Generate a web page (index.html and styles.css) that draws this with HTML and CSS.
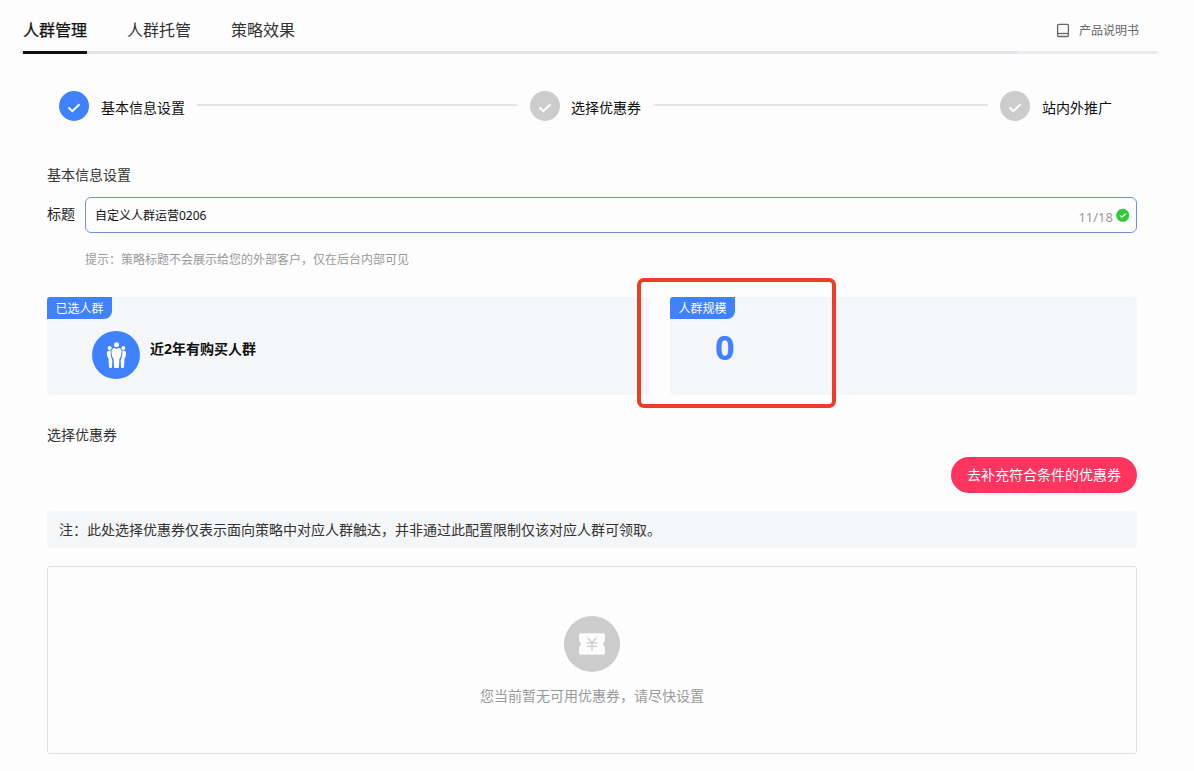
FILE: index.html
```html
<!DOCTYPE html>
<html lang="zh-CN">
<head>
<meta charset="utf-8">
<title>人群管理</title>
<link rel="stylesheet" href="styles.css">
</head>
<body>
<header class="header">
  <nav class="tabs">
    <a class="tab tab-active">人群管理</a>
    <a class="tab">人群托管</a>
    <a class="tab">策略效果</a>
  </nav>
  <a class="manual">
    <svg width="14" height="16" viewBox="0 0 14 16" fill="none" stroke="#666" stroke-width="1.3"><rect x="1.6" y="1.400" width="10.8" height="12.1" rx="1"/><path d="M1.6 10.500h10.8"/></svg>
    <span>产品说明书</span>
  </a>
</header>
<main class="main">
  <div class="steps">
    <div class="step step-done"><span class="dot"><svg width="30" height="30" viewBox="0 0 30 30"><path d="M9.500 16.400l3.8 3.8 7.2-7"/></svg></span><span class="step-name">基本信息设置</span></div>
    <i class="step-line"></i>
    <div class="step"><span class="dot"><svg width="30" height="30" viewBox="0 0 30 30"><path d="M9.500 16.400l3.8 3.8 7.2-7"/></svg></span><span class="step-name step-name-near">选择优惠券</span></div>
    <i class="step-line step-line-near"></i>
    <div class="step"><span class="dot"><svg width="30" height="30" viewBox="0 0 30 30"><path d="M9.500 16.400l3.8 3.8 7.2-7"/></svg></span><span class="step-name">站内外推广</span></div>
  </div>

  <h2 class="section-title">基本信息设置</h2>
  <div class="field">
    <label class="label">标题</label>
    <div class="input">
      <span class="value">自定义人群运营0206</span>
      <span class="count">11/18</span>
      <svg class="valid" width="14" height="14" viewBox="0 0 14 14"><circle cx="6.700" cy="7.300" r="6.5" fill="#2fca3a"/><path d="M3.900 7.4l2 1.8 3.8-3.5" fill="none" stroke="#fff" stroke-width="1.2"/></svg>
    </div>
  </div>
  <p class="hint">提示：策略标题不会展示给您的外部客户，仅在后台内部可见</p>

  <div class="cards">
    <section class="card card-crowd">
      <span class="tag">已选人群</span>
      <div class="crowd">
        <svg width="48" height="48" viewBox="0 0 48 48"><circle cx="24" cy="24" r="24" fill="#3f81ff"/><g fill="#fff"><circle cx="17.6" cy="17" r="2"/><circle cx="31.4" cy="17" r="2"/><path d="M18.600 19.500c-2.400-.5-3.700.6-3.700 2.500 0 2.200.5 4.200 1.600 5.500l.4 8.100q.1 1.300 1.100 1.300h1.300q.8 0 .8-1.100l.2-6.500c-1.300-2.500-1.700-6-1.700-9.800zM30.400 19.500c2.400-.5 3.700.6 3.700 2.500 0 2.200-.5 4.200-1.600 5.500l-.4 8.100q-.1 1.300-1.100 1.300h-1.300q-.8 0-.8-1.100l-.2-6.500c1.300-2.500 1.700-6 1.700-9.800z"/><circle cx="24.500" cy="13.800" r="2.500"/><path d="M24.500 18l1.800-1c2.300.2 3.200 1.500 3.200 3.400 0 3-.7 5.500-2.100 7.500l-.4 8q-.1 1-1.100 1h-2.800q-1 0-1.100-1l-.4-8c-1.400-2-2.100-4.500-2.100-7.500 0-1.900.9-3.200 3.200-3.400z"/></g></svg>
        <strong class="crowd-name">近2年有购买人群</strong>
      </div>
    </section>
    <section class="card card-size">
      <span class="tag">人群规模</span>
      <strong class="size">0</strong>
      <div class="highlight"></div>
    </section>
  </div>

  <h2 class="section-title section-coupon">选择优惠券</h2>
  <div class="actions"><button class="add">去补充符合条件的优惠券</button></div>
  <p class="note">注：此处选择优惠券仅表示面向策略中对应人群触达，并非通过此配置限制仅该对应人群可领取。</p>
  <div class="empty">
    <svg width="56" height="56" viewBox="0 0 56 56"><circle cx="28" cy="28" r="28" fill="#ccc"/><path d="M17 17.200h22q2 0 2 2v6a2.700 2.700 0 0 0 0 5.200v6.300q0 2-2 2h-22q-2 0-2-2v-6.300a2.700 2.700 0 0 0 0-5.200v-6q0-2 2-2z" fill="#fdfdfd"/><path d="M23.800 22l4.200 4.800 4.200-4.800M22.800 26.800h10.400M22.800 30.400h10.400M28 26.800v8" fill="none" stroke="#ccc" stroke-width="1.300"/></svg>
    <p class="empty-text">您当前暂无可用优惠券，请尽快设置</p>
  </div>
</main>
</body>
</html>
```
FILE: styles.css
```css
* { box-sizing: border-box; }
body {
  margin: 0;
  height: 771px;
  overflow: hidden;
  background: #fdfdfd;
  color: #333;
  font: 14px/20px "Noto Sans", "Noto Sans CJK SC", sans-serif;
}
p, h2 { margin: 0; font-size: 14px; font-weight: 400; }
svg { display: block; flex: none; }
.header {
  display: flex;
  justify-content: space-between;
  height: 54px;
  margin: 0 36px 0 20px;
  padding: 0 19px 0 3px;
  background: linear-gradient(90deg, #e1e4e8 998px, #ebebf0 998px) 0 100% / 100% 3px no-repeat;
}
.tabs { display: flex; gap: 40px; }
.tab { height: 54px; padding-top: 18px; font-size: 16px; line-height: 24px; color: #333; }
.tab-active { color: #111; -webkit-text-stroke: 0.25px #111; border-bottom: 3px solid #111; }
.manual { display: flex; align-items: center; gap: 9px; height: 61px; font-size: 12px; color: #666; }
.main { padding: 37px 57px 0 47px; }
.steps { display: flex; align-items: center; height: 30px; padding: 0 25px 0 12px; }
.step { display: flex; align-items: center; color: #111; }
.dot { width: 30px; height: 30px; border-radius: 50%; background: #ccc; }
.dot path { fill: none; stroke: #fff; stroke-width: 1.9; }
.step-done .dot { background: #3f81ff; }
.step-name { margin-left: 12px; padding-top: 3px; white-space: nowrap; }
.step-name-near { margin-left: 11px; }
.step-line { flex: 321 1 0; height: 2px; margin: 0 12px; background: #e4e4ea; transform: translateY(-1px); }
.step-line-near { flex-grow: 334; margin-left: 13px; }
.section-title { margin-top: 44px; height: 20px; }
.field { display: flex; margin-top: 12px; }
.label { width: 38px; padding-top: 7px; color: #222; }
.input {
  display: flex;
  align-items: center;
  flex: 1;
  height: 36px;
  padding: 0 6px 0 9px;
  border: 1px solid #7391d0;
  border-radius: 6px;
}
.value { flex: 1; padding-top: 2px; font-size: 12px; color: #111; }
.count { padding-top: 4px; margin-right: 3px; font-size: 13px; color: #999; }
.hint { margin: 17px 0 0 38px; font-size: 12px; color: #999; }
.cards { display: flex; gap: 20px; margin-top: 27px; }
.card { position: relative; height: 98px; background: #f5f6f8; border-radius: 4px; }
.card-crowd { width: 603px; }
.card-size { flex: 1; }
.tag {
  display: block;
  width: 65px;
  height: 22px;
  background: #3f81ff;
  border-radius: 3px 0 8px 0;
  color: #fff;
  font-size: 12px;
  line-height: 24px;
  text-align: center;
}
.crowd { display: flex; gap: 10px; padding: 12px 0 0 45px; }
.crowd-name { padding-top: 8px; color: #111; font-weight: 700; }
.size { display: block; padding: 8px 0 0 45px; color: #3f81ff; font-size: 34px; line-height: 40px; }
.highlight {
  position: absolute;
  left: -33px;
  top: -19px;
  width: 199px;
  height: 130px;
  border: 4px solid #ee3d26;
  border-radius: 7px;
}
.section-coupon { margin-top: 30px; }
.actions { display: flex; justify-content: flex-end; margin-top: 12px; }
.add {
  width: 186px;
  height: 36px;
  padding: 0;
  border: 0;
  border-radius: 18px;
  background: #ff3560;
  color: #fff;
  font: inherit;
}
.note { height: 37px; margin-top: 18px; padding-left: 12px; border-radius: 4px; background: #f5f6f8; line-height: 37px; }
.empty {
  display: flex;
  flex-direction: column;
  align-items: center;
  height: 188px;
  margin-top: 18px;
  padding-top: 49px;
  border: 1px solid #dedede;
  border-radius: 3px;
}
.empty-text { margin-top: 14px; color: #999; }
```
